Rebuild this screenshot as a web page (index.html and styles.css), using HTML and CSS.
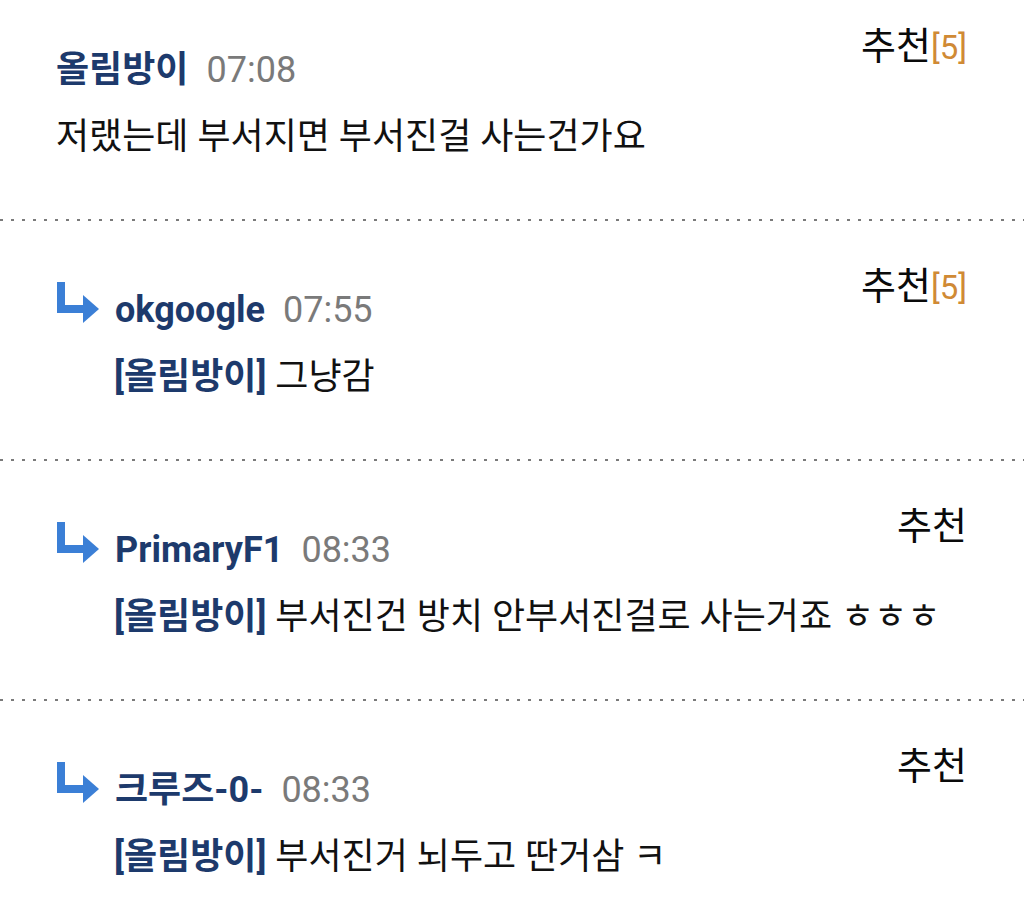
FILE: index.html
```html
<!DOCTYPE html>
<html lang="ko">
<head>
    <meta charset="UTF-8">
    <meta name="viewport" content="width=device-width, initial-scale=1.0">
    <title>댓글</title>
    <link rel="stylesheet" href="styles.css">
</head>
<body>
    <div class="comments">
        <div class="comment first">
            <div class="main">
                <div class="head">
                    <span class="name">올림방이</span>
                    <span class="time">07:08</span>
                </div>
                <p class="text">저랬는데 부서지면 부서진걸 사는건가요</p>
            </div>
            <div class="vote">추천<span class="count">[5]</span></div>
        </div>

        <div class="comment reply">
            <div class="main">
                <div class="head">
                    <svg class="arrow" viewBox="0 0 44 42" width="44" height="42">
                        <path d="M1 0h8v23h20v8H1z" fill="#3b7fd6"/>
                        <path d="M27 13l16 14-16 14z" fill="#3b7fd6"/>
                    </svg>
                    <span class="name">okgoogle</span>
                    <span class="time">07:55</span>
                </div>
                <p class="text"><b class="to">[올림방이]</b> 그냥감</p>
            </div>
            <div class="vote">추천<span class="count">[5]</span></div>
        </div>

        <div class="comment reply">
            <div class="main">
                <div class="head">
                    <svg class="arrow" viewBox="0 0 44 42" width="44" height="42">
                        <path d="M1 0h8v23h20v8H1z" fill="#3b7fd6"/>
                        <path d="M27 13l16 14-16 14z" fill="#3b7fd6"/>
                    </svg>
                    <span class="name">PrimaryF1</span>
                    <span class="time">08:33</span>
                </div>
                <p class="text"><b class="to">[올림방이]</b> 부서진건 방치 안부서진걸로 사는거죠 ㅎㅎㅎ</p>
            </div>
            <div class="vote">추천</div>
        </div>

        <div class="comment reply last">
            <div class="main">
                <div class="head">
                    <svg class="arrow" viewBox="0 0 44 42" width="44" height="42">
                        <path d="M1 0h8v23h20v8H1z" fill="#3b7fd6"/>
                        <path d="M27 13l16 14-16 14z" fill="#3b7fd6"/>
                    </svg>
                    <span class="name">크루즈-0-</span>
                    <span class="time">08:33</span>
                </div>
                <p class="text"><b class="to">[올림방이]</b> 부서진거 뇌두고 딴거삼 ㅋ</p>
            </div>
            <div class="vote">추천</div>
        </div>
    </div>
</body>
</html>
```

FILE: styles.css
```css
body {
    margin: 0;
    background: #fff;
    font-family: Roboto, "Noto Sans CJK KR", sans-serif;
    color: #111;
}
.comments {
    display: flex;
    flex-direction: column;
}
.comment {
    display: grid;
    grid-template-columns: 1fr auto;
    padding: 47px 57px 62px 56px;
    background: linear-gradient(to right, #7a7a7a 3px, transparent 3px) left bottom / 11px 2px repeat-x;
}
.comment.first {
    padding-top: 28px;
}
.comment.last {
    background: none;
}
.main {
    grid-column: 1 / -1;
    grid-row: 1;
    padding-top: 20px;
}
.head {
    display: flex;
    align-items: flex-end;
    gap: 18px;
    height: 44px;
    line-height: 44px;
}
.arrow {
    flex: none;
    margin-right: -3px;
    margin-bottom: 8px;
}
.name {
    font-size: 36px;
    font-weight: bold;
    color: #1d3a6c;
}
.time {
    font-size: 36px;
    color: #7a7a7a;
}
.text {
    margin: 23px 0 0;
    font-size: 36px;
    line-height: 44px;
    white-space: nowrap;
}
.reply .text {
    padding-left: 58px;
}
.to {
    color: #1d3a6c;
}
.vote {
    grid-column: 2;
    grid-row: 1;
    align-self: start;
    margin-top: -2px;
    font-size: 38px;
    line-height: 40px;
    color: #0a0a0a;
    white-space: nowrap;
}
.count {
    font-size: 33px;
    color: #d08a35;
}
```
